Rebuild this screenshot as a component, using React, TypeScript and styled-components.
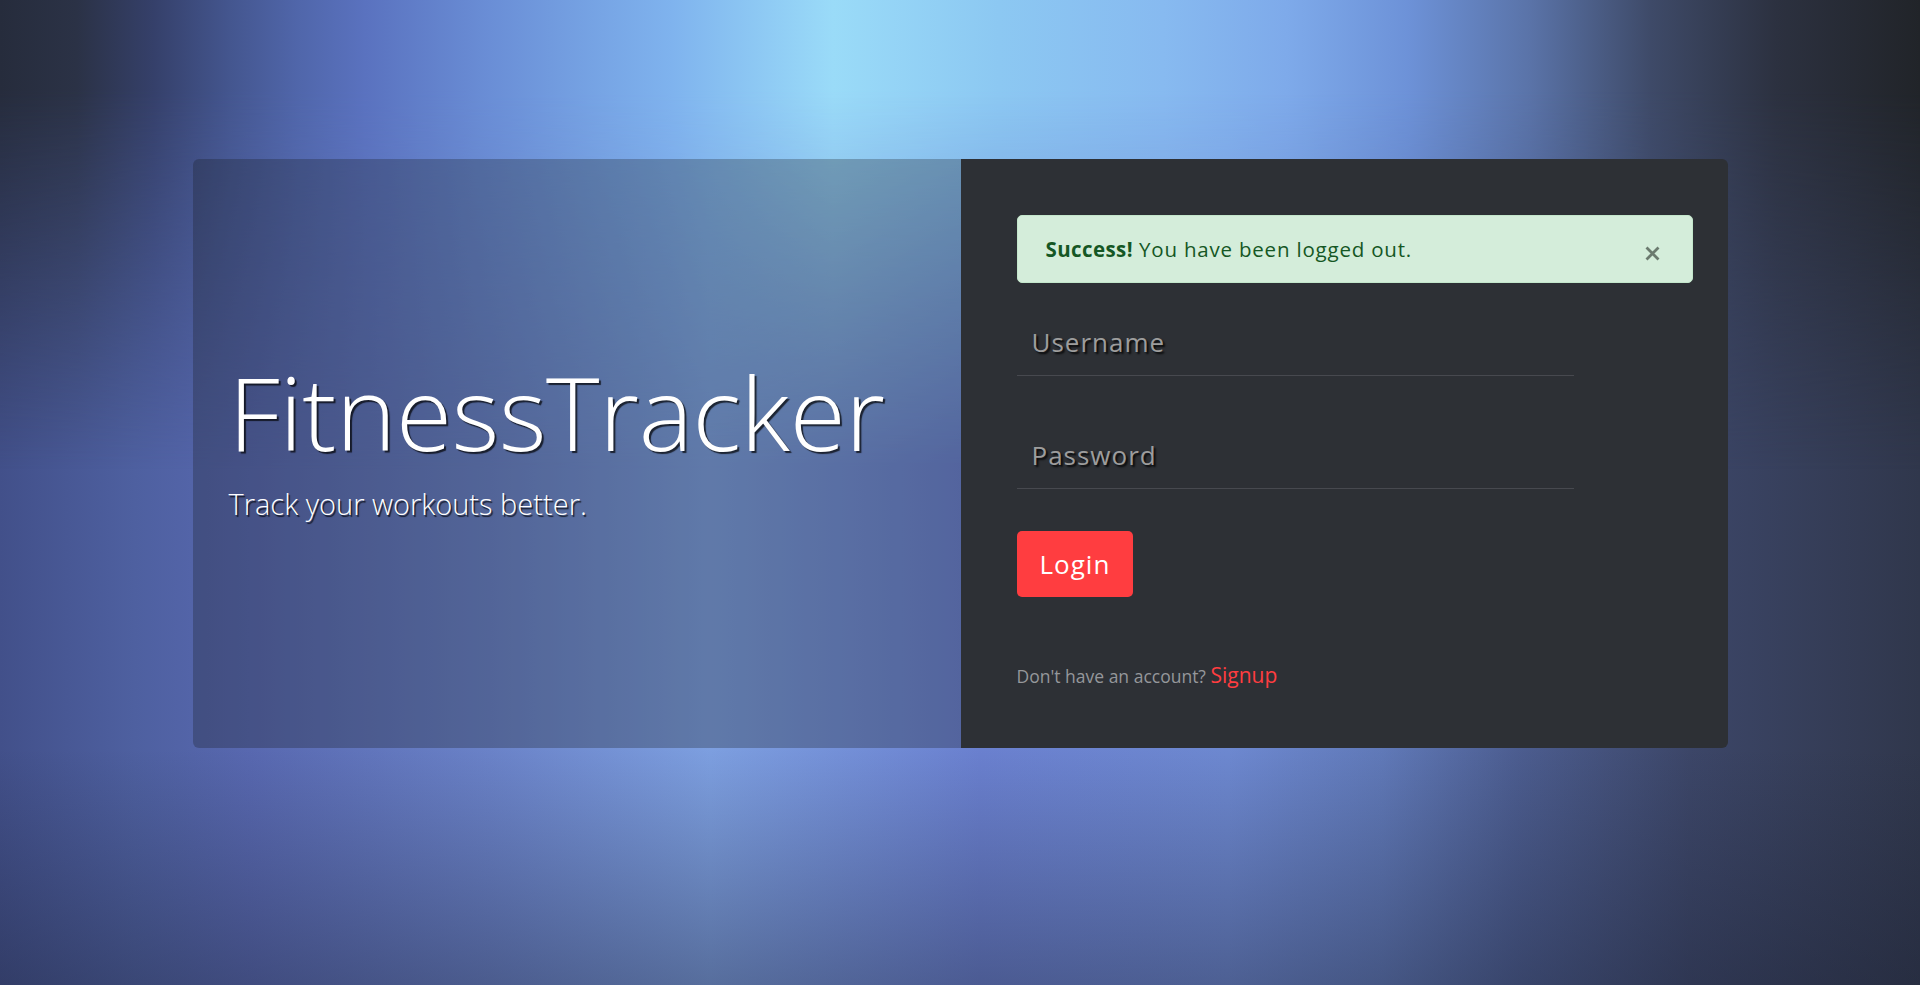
import React from "react";
import styled, { createGlobalStyle } from "styled-components";

const GlobalStyle = createGlobalStyle`
  *, *::before, *::after { box-sizing: border-box; }
  html, body { margin: 0; padding: 0; }
  body {
    font-family: "Open Sans", Lato, "Liberation Sans", sans-serif;
    background: #2a3045;
  }
`;

const Page = styled.main`
  position: relative;
  min-height: 100vh;
  padding-top: 159px;
  display: flex;
  justify-content: center;
  align-items: flex-start;
  overflow: hidden;
  background:
    linear-gradient(to bottom, rgba(25, 30, 48, 0) 76%, rgba(25, 30, 48, 0.38) 100%),
    linear-gradient(
      90deg,
      #42508a 0%,
      #4e60a0 7%,
      #5868b0 13%,
      #6a82c8 25.5%,
      #7d9fe0 37%,
      #6a80cf 51%,
      #6d88d0 64%,
      #6079b8 72%,
      #4c5d90 79%,
      #3c4668 88%,
      #30374c 100%
    );

  &::before {
    content: "";
    position: absolute;
    inset: 0;
    background: linear-gradient(
      90deg,
      #262c3c 0%,
      #2b3246 4%,
      #35406a 8%,
      #44568f 12%,
      #5066aa 15.5%,
      #5a72bf 19%,
      #6a8ed6 25.5%,
      #7fb3ee 35%,
      #9adbf8 43.4%,
      #8cc8f2 52%,
      #87baf0 60.6%,
      #7eaaea 67%,
      #6d92d8 73.3%,
      #5a73a8 79.7%,
      #3e4a68 86%,
      #2c3140 92.5%,
      #212429 100%
    );
    -webkit-mask-image: linear-gradient(to bottom, #000 90px, transparent 470px);
    mask-image: linear-gradient(to bottom, #000 90px, transparent 470px);
  }
`;

const Card = styled.section`
  position: relative;
  z-index: 1;
  width: 1535px;
  height: 589px;
  display: grid;
  grid-template-columns: 768px 767px;
  border-radius: 6px;
  overflow: hidden;
`;

const BrandPanel = styled.div`
  background: rgba(22, 26, 30, 0.28);
  display: flex;
  flex-direction: column;
  justify-content: center;
  padding: 0 0 30px 36px;
  color: #fff;
`;

const Title = styled.h1`
  margin: 0;
  font-size: 102px;
  line-height: 112px;
  font-weight: 300;
  letter-spacing: -0.3px;
  text-shadow: 2px 2px 1px rgba(0, 0, 0, 0.7);
`;

const Tagline = styled.p`
  margin: 18px 0 0;
  font-size: 29px;
  line-height: 36px;
  font-weight: 300;
  text-shadow: 1.5px 1.5px 1px rgba(0, 0, 0, 0.7);
`;

const FormPanel = styled.div`
  background: #2d3035;
  display: flex;
  flex-direction: column;
  align-items: flex-start;
  padding: 56px 35px 0 56px;
`;

const Alert = styled.div`
  width: 100%;
  display: flex;
  align-items: center;
  justify-content: space-between;
  padding: 17px 28px;
  font-size: 20.5px;
  line-height: 32px;
  letter-spacing: 0.8px;
  color: #155724;
  background: #d4edda;
  border: 1px solid #c3e6cb;
  border-radius: 5px;

  strong { font-weight: 700; letter-spacing: 0.4px; }
`;

const CloseButton = styled.button`
  display: flex;
  align-items: center;
  justify-content: center;
  padding: 0;
  margin: 8px 4px 0 0;
  border: none;
  background: none;
  cursor: pointer;
  color: #6b7a6e;
`;

const Form = styled.form`
  width: 557px;
  margin-top: 26px;
  display: flex;
  flex-direction: column;
  align-items: flex-start;
`;

const Field = styled.input`
  width: 100%;
  height: 67px;
  padding: 0 15px;
  border: none;
  border-bottom: 1px solid #47494f;
  background: transparent;
  font-family: inherit;
  font-size: 26px;
  font-weight: 400;
  letter-spacing: 1px;
  color: #e0e0e0;
  text-shadow: 2px 2px 2px rgba(0, 0, 0, 0.85);
  outline: none;

  & + & { margin-top: 46px; }

  &::placeholder {
    color: #9d9d9d;
    opacity: 1;
  }
`;

const SubmitButton = styled.button`
  margin-top: 42px;
  height: 66px;
  padding: 0 23px;
  border: none;
  border-radius: 5px;
  background: #ff3d40;
  color: #fff;
  font-family: inherit;
  font-size: 26px;
  font-weight: 400;
  letter-spacing: 1px;
  cursor: pointer;
`;

const Footnote = styled.p`
  margin: 65px 0 0;
  font-size: 17.5px;
  line-height: 26px;
  color: #95979b;
`;

const SignupLink = styled.a`
  font-size: 21px;
  line-height: 26px;
  color: #ff3d40;
  text-decoration: none;
`;

export default function App() {
  return (
    <>
      <GlobalStyle />
      <Page>
        <Card>
          <BrandPanel>
            <Title>FitnessTracker</Title>
            <Tagline>Track your workouts better.</Tagline>
          </BrandPanel>
          <FormPanel>
            <Alert role="alert">
              <span>
                <strong>Success!</strong> You have been logged out.
              </span>
              <CloseButton type="button" aria-label="Close">
                <svg width="15" height="15" viewBox="0 0 15 15" fill="none">
                  <path d="M1.5 1.5 L13.5 13.5 M13.5 1.5 L1.5 13.5" stroke="currentColor" strokeWidth="2.8" />
                </svg>
              </CloseButton>
            </Alert>
            <Form onSubmit={(e) => e.preventDefault()}>
              <Field type="text" placeholder="Username" />
              <Field type="password" placeholder="Password" />
              <SubmitButton type="submit">Login</SubmitButton>
            </Form>
            <Footnote>
              Don't have an account? <SignupLink href="#">Signup</SignupLink>
            </Footnote>
          </FormPanel>
        </Card>
      </Page>
    </>
  );
}
